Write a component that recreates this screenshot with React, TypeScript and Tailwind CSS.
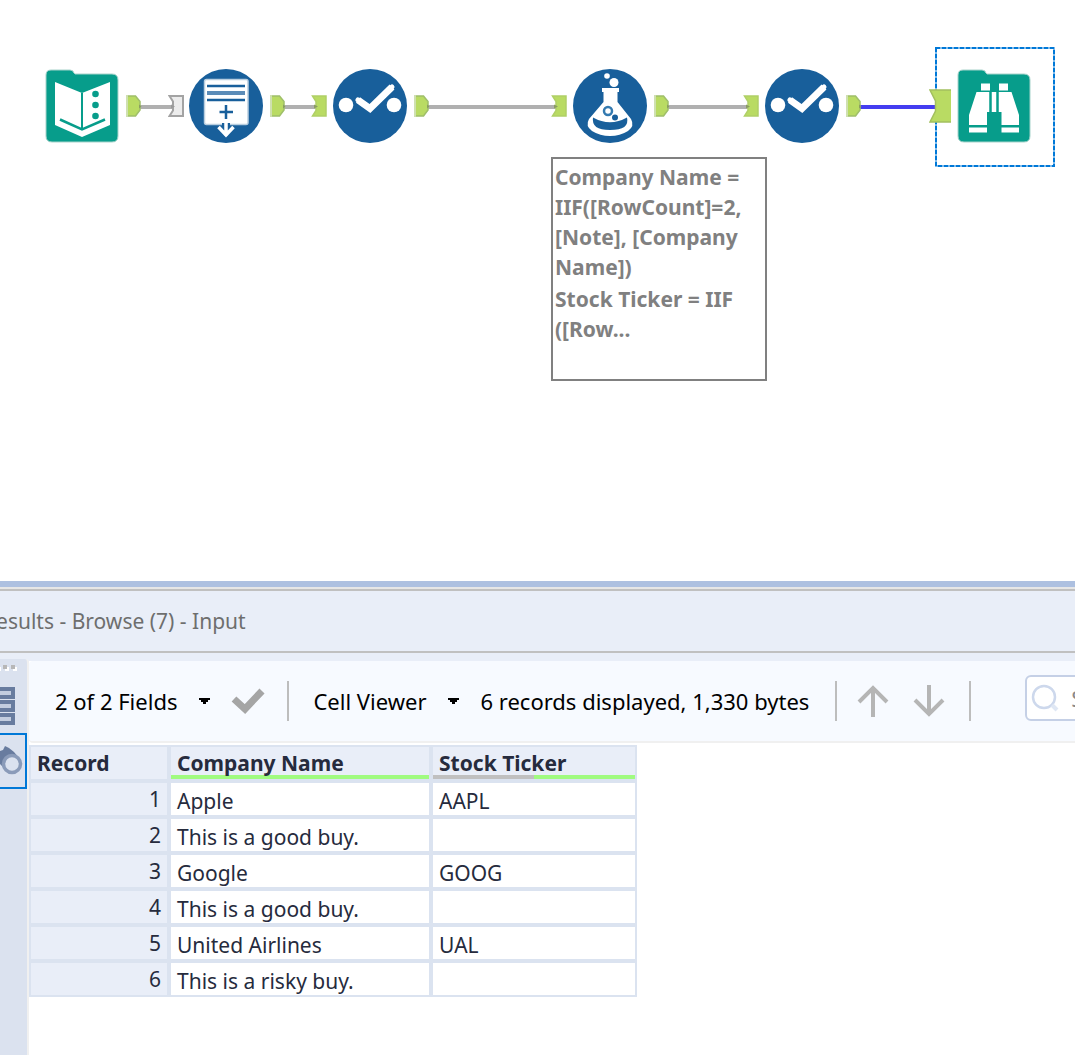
import type { ReactNode } from "react";

const GREEN = "#b9db63";
const GREEN_EDGE = "#9fbf6a";

function Place({ className, children }: { className: string; children: ReactNode }) {
  return <div className={"absolute " + className}>{children}</div>;
}

function OutAnchor({ className }: { className: string }) {
  return (
    <Place className={className}>
      <svg className="block" width="16" height="22" viewBox="0 0 16 22">
        <path d="M1 1H9.500L14 6.500V15L9.500 21H1Z" fill={GREEN} stroke={GREEN_EDGE} strokeWidth="1.500" />
        <path d="M1 0V22" stroke="#cfe0b0" strokeWidth="2" />
        <path d="M13 9.500L15.500 11.500L13 13.500" fill="#8a9d62" />
      </svg>
    </Place>
  );
}

function InAnchor({ className, optional = false }: { className: string; optional?: boolean }) {
  return (
    <Place className={className}>
      <svg className="block" width="16" height="22" viewBox="0 0 16 22">
        <path
          d="M1.500 1H15V21H1.500L5 15.500V6.500Z"
          fill={optional ? "#ececec" : GREEN}
          stroke={optional ? "#a3a3a3" : "#b0d067"}
          strokeWidth={optional ? 2 : 1.500}
        />
        <path d="M3 9.500L7 11.500L3 13.500Z" fill={optional ? "#9a9a9a" : "#8a9d62"} />
      </svg>
    </Place>
  );
}

function InputTool() {
  return (
    <svg className="block" width="74" height="74" viewBox="0 0 74 74" role="img" aria-label="Input Data">
      <path d="M6 1H25Q28 1 29 4L30 5H67Q73 5 73 11V67Q73 73 67 73H7Q1 73 1 67V6Q1 1 6 1Z" fill="#079d8b" stroke="#a8d3cb" strokeWidth="1" />
      <path d="M10 13L37 24L65 13V56L37 68L10 56Z" fill="#fff" />
      <path d="M37 24V60" stroke="#079d8b" strokeWidth="2" />
      <path d="M15 50.500L37 60.500L60 50.500" fill="none" stroke="#079d8b" strokeWidth="2.500" />
      <circle cx="50.500" cy="25" r="3.300" fill="#079d8b" />
      <circle cx="50.500" cy="36" r="3.300" fill="#079d8b" />
      <circle cx="50.500" cy="47" r="3.300" fill="#079d8b" />
    </svg>
  );
}

function RecordTool() {
  return (
    <svg className="block" width="74" height="74" viewBox="0 0 74 74" role="img" aria-label="Multi-Row Formula">
      <circle cx="37" cy="37" r="37" fill="#185f9b" />
      <rect x="15.500" y="10.500" width="43.500" height="45" rx="2" fill="#fff" stroke="#b9cee0" strokeWidth="1.500" />
      <path d="M18 17H56M18 31H56" stroke="#185f9b" strokeWidth="2.500" />
      <path d="M18 24H56" stroke="#5b8cb8" strokeWidth="4" />
      <path d="M37 36V50M30.500 43H44" stroke="#185f9b" strokeWidth="2.500" />
      <path d="M37 54V65" stroke="#185f9b" strokeWidth="8" />
      <path d="M37 54V67M29.500 58L37 66L44.500 58" fill="none" stroke="#fff" strokeWidth="3.500" />
    </svg>
  );
}

function SelectTool() {
  return (
    <svg className="block" width="74" height="74" viewBox="0 0 74 74" role="img" aria-label="Select">
      <circle cx="37" cy="37" r="37" fill="#185f9b" />
      <circle cx="13" cy="36" r="7.300" fill="#fff" />
      <circle cx="61" cy="36" r="7.300" fill="#fff" />
      <path d="M25 31L37 39.500L59 18" fill="none" stroke="#fff" strokeWidth="7" />
      <path d="M25 31L37 39.500L59 18" fill="none" stroke="#fff" strokeWidth="5" strokeLinecap="round" />
    </svg>
  );
}

function FormulaTool() {
  return (
    <svg className="block" width="74" height="74" viewBox="0 0 74 74" role="img" aria-label="Formula">
      <circle cx="37" cy="37" r="37" fill="#185f9b" />
      <circle cx="34" cy="7" r="2.800" fill="#fff" />
      <circle cx="41" cy="13.500" r="4.500" fill="#fff" />
      <path d="M29 19H46V23H44.500V33L58 50Q62 57 55 62Q47 67 37 67Q27 67 19 62Q12 57 16 50L30.500 33V23H29Z" fill="#fff" />
      <path d="M20 48.500Q37 58 54 48.500Q57 61 37 61Q18 61 20 48.500Z" fill="#185f9b" />
      <circle cx="35" cy="42" r="4" fill="#fff" stroke="#347ab0" strokeWidth="2.500" />
      <circle cx="42" cy="48.500" r="3" fill="#185f9b" />
    </svg>
  );
}

function BrowseTool() {
  return (
    <svg className="block" width="74" height="74" viewBox="0 0 74 74" role="img" aria-label="Browse">
      <path d="M6 1H25Q28 1 29 4L30 5H67Q73 5 73 11V67Q73 73 67 73H7Q1 73 1 67V6Q1 1 6 1Z" fill="#079d8b" stroke="#a8d3cb" strokeWidth="1" />
      <path d="M24 14.500H33V21.500H24ZM42 14.500H51V21.500H42Z" fill="#fff" />
      <path d="M19.500 23H54.500L62 46V56H44.500V43H30V56H12V46Z" fill="#fff" />
      <path d="M12 58.500H30V63.500H12ZM44.500 58.500H62V63.500H44.500Z" fill="#fff" />
      <path d="M33.500 23V43M40.500 23V43" stroke="#079d8b" strokeWidth="2.500" />
    </svg>
  );
}

function Wires() {
  return (
    <svg className="absolute left-0 top-0" width="1075" height="200" viewBox="0 0 1075 200" aria-hidden="true">
      <path d="M140 107H174M284 107H317M428 107H557M668 107H749" stroke="#b0b0b0" strokeWidth="4" />
      <path d="M860 107H936" stroke="#443df0" strokeWidth="4" />
    </svg>
  );
}

function WorkflowCanvas() {
  return (
    <section aria-label="Workflow" className="relative min-h-[581px] shrink-0 overflow-hidden bg-white">
      <Place className="left-[935px] top-[47px]">
        <svg className="block" width="120" height="120" viewBox="0 0 120 120" aria-hidden="true">
          <rect x="1" y="1" width="118" height="118" fill="none" stroke="#80bbeb" strokeWidth="2" />
          <rect x="1" y="1" width="118" height="118" fill="none" stroke="#0078d7" strokeWidth="2" strokeDasharray="4 2" />
        </svg>
      </Place>
      <Wires />
      <Place className="left-[45px] top-[69px]"><InputTool /></Place>
      <OutAnchor className="left-[126px] top-[95px]" />
      <InAnchor className="left-[168px] top-[95px]" optional />
      <Place className="left-[189px] top-[69px]"><RecordTool /></Place>
      <OutAnchor className="left-[270px] top-[95px]" />
      <InAnchor className="left-[311px] top-[95px]" />
      <Place className="left-[333px] top-[69px]"><SelectTool /></Place>
      <OutAnchor className="left-[414px] top-[95px]" />
      <InAnchor className="left-[551px] top-[95px]" />
      <Place className="left-[573px] top-[69px]"><FormulaTool /></Place>
      <OutAnchor className="left-[654px] top-[95px]" />
      <InAnchor className="left-[743px] top-[95px]" />
      <Place className="left-[765px] top-[69px]"><SelectTool /></Place>
      <OutAnchor className="left-[846px] top-[95px]" />
      <Place className="left-[929px] top-[89px]">
        <svg className="block" width="22" height="34" viewBox="0 0 22 34" aria-hidden="true">
          <path d="M1 1H22V33H1L6.500 22V12Z" fill={GREEN} />
          <path d="M22 1H1L6.500 12V22L1 33H22" fill="none" stroke="#a3c05f" strokeWidth="1.500" />
        </svg>
      </Place>
      <Place className="left-[957px] top-[69px]"><BrowseTool /></Place>
      <Place className="left-[551px] top-[157px] h-[224px] w-[216px] border-2 border-[#808080] bg-white px-0.5 py-[3px] text-[21px] font-bold leading-[30px] text-[#808080]">
        <p>Company Name = IIF([RowCount]=2, [Note], [Company Name])</p>
        <p className="mt-0.5">Stock Ticker = IIF ([Row...</p>
      </Place>
    </section>
  );
}

function Divider() {
  return <div className="h-10 w-0.5 shrink-0 bg-[#bdbdbd]" />;
}

function Caret() {
  return (
    <svg className="block" width="12" height="6" viewBox="0 0 12 6" aria-hidden="true">
      <path d="M0 0H11V2H9V4H7V6H4V4H2V2H0Z" fill="#000" />
    </svg>
  );
}

function SideBar() {
  return (
    <nav aria-label="Result views" className="-mt-0.5 flex w-[29px] shrink-0 flex-col items-start overflow-hidden rounded-tr border-r-2 border-[#f0f0f0] bg-[#dbe2ef]">
      <svg className="mt-1 block" width="27" height="8" viewBox="0 0 27 8" aria-hidden="true">
        <path d="M0 4H1V8H0ZM5 4H9V8H5ZM13 4H17V8H13Z" fill="#fff" />
        <path d="M3 2H7V6H3ZM11 2H15V6H11Z" fill="#b7b7b7" />
      </svg>
      <button type="button" aria-label="Messages" className="mt-4 block">
        <svg className="block" width="16" height="38" viewBox="0 0 16 38" aria-hidden="true">
          <path d="M-4 0H15V12H-4ZM-4 13H15V25H-4ZM-4 26H15V38H-4Z" fill="#687c9f" />
          <path d="M0 4H11V8H0ZM0 17H11V21H0ZM0 30H11V34H0Z" fill="#c3cddf" />
        </svg>
      </button>
      <button type="button" aria-label="Data" className="mt-2 block h-14 w-[27px] border-y-2 border-r-2 border-[#0078d7]">
        <svg className="block" width="25" height="52" viewBox="0 0 25 52" aria-hidden="true">
          <path d="M0 16L3 15L5 11L9 13L14 17L19 23L5 34L0 29Z" fill="#687c9f" />
          <circle cx="12" cy="29" r="8.500" fill="#dbe2ef" stroke="#8a9bb9" strokeWidth="3.500" />
        </svg>
      </button>
    </nav>
  );
}

function Toolbar() {
  return (
    <div className="flex h-[82px] shrink-0 items-center overflow-hidden rounded-l border-b-2 border-[#f0f0f0] bg-[#f7faff] text-[22px] text-black">
      <button type="button" className="ml-[26px] flex shrink-0 items-center gap-[22px] whitespace-nowrap">
        2 of 2 Fields
        <Caret />
      </button>
      <button type="button" aria-label="Apply" className="ml-5 shrink-0">
        <svg className="block" width="34" height="28" viewBox="0 0 34 28" aria-hidden="true">
          <path d="M3 12L14 22L31 4" fill="none" stroke="#a5a5a5" strokeWidth="7" />
        </svg>
      </button>
      <div className="ml-[22px]"><Divider /></div>
      <button type="button" className="ml-6 flex shrink-0 items-center gap-[22px] whitespace-nowrap">
        Cell Viewer
        <Caret />
      </button>
      <span className="ml-5 shrink-0 whitespace-nowrap">6 records displayed, 1,330 bytes</span>
      <div className="ml-[26px]"><Divider /></div>
      <button type="button" aria-label="Previous" className="ml-5 shrink-0">
        <svg className="block" width="32" height="32" viewBox="0 0 32 32" aria-hidden="true">
          <path d="M16 32V3M2 17L16 3L30 17" fill="none" stroke="#b5b5b5" strokeWidth="4" />
        </svg>
      </button>
      <button type="button" aria-label="Next" className="ml-6 shrink-0">
        <svg className="block" width="32" height="32" viewBox="0 0 32 32" aria-hidden="true">
          <path d="M16 0V29M2 15L16 29L30 15" fill="none" stroke="#b5b5b5" strokeWidth="4" />
        </svg>
      </button>
      <div className="ml-6"><Divider /></div>
      <label className="ml-[54px] mb-1.5 flex h-[46px] w-60 shrink-0 items-center rounded-md border-2 border-[#c5d0e6] bg-white pl-1">
        <svg className="block shrink-0" width="28" height="28" viewBox="0 0 28 28" aria-hidden="true">
          <circle cx="13" cy="13" r="11" fill="none" stroke="#cdd8ec" strokeWidth="2.500" />
          <path d="M21 21L26 26" stroke="#dfe7f4" strokeWidth="4" />
        </svg>
        <input type="text" aria-label="Search" placeholder="Search" className="ml-3 w-40 bg-transparent outline-none placeholder:text-[#8a8a8a]" />
      </label>
    </div>
  );
}

const rows: [string, string][] = [
  ["Apple", "AAPL"],
  ["This is a good buy.", ""],
  ["Google", "GOOG"],
  ["This is a good buy.", ""],
  ["United Airlines", "UAL"],
  ["This is a risky buy.", ""],
];

function ResultsTable() {
  return (
    <table className="mt-0.5 w-[608px] table-fixed border-separate border-spacing-0 text-left text-[21px] leading-7 text-[#262b3d]">
      <colgroup>
        <col className="w-[140px]" />
        <col className="w-[262px]" />
        <col className="w-[206px]" />
      </colgroup>
      <thead>
        <tr className="h-9">
          <th scope="col" className="border-2 border-[#dbe3f0] bg-[#e9eef8] p-0 align-top font-bold">
            <div className="h-8 px-1.5 leading-8">Record</div>
          </th>
          <th scope="col" className="border-2 border-[#dbe3f0] bg-[#e9eef8] p-0 align-top font-bold">
            <div className="h-7 px-1.5 leading-8">Company Name</div>
            <div className="h-1 bg-[#a0fb80]" />
          </th>
          <th scope="col" className="border-2 border-[#dbe3f0] bg-[#e9eef8] p-0 align-top font-bold">
            <div className="h-7 px-1.5 leading-8">Stock Ticker</div>
            <div className="flex h-1 bg-[#a0fb80]"><div className="w-1/2 bg-[#c0c0c0]" /></div>
          </th>
        </tr>
      </thead>
      <tbody>
        {rows.map(([company, ticker], i) => (
          <tr key={i} className="h-9">
            <td className="border-2 border-[#dbe3f0] bg-[#e9eef8] px-1.5 py-0.5 text-right">{i + 1}</td>
            <td className="border-2 border-[#dbe3f0] bg-white px-1.5 pb-0 pt-1">{company}</td>
            <td className="border-2 border-[#dbe3f0] bg-white px-1.5 pb-0 pt-1">{ticker}</td>
          </tr>
        ))}
      </tbody>
    </table>
  );
}

export default function App() {
  return (
    <main className="flex min-h-screen flex-col overflow-hidden bg-white font-['Noto_Sans',sans-serif]">
      <WorkflowCanvas />
      <div className="h-1.5 shrink-0 bg-[#adc0e0]" />
      <section aria-label="Results" className="flex flex-1 flex-col border-t-2 border-[#e6e6e6] bg-[#e9eef8]">
        <header className="flex h-16 shrink-0 items-center overflow-hidden border-y-2 border-[#c0c0c0] pt-0.5">
          <h2 className="-ml-[17px] whitespace-nowrap text-[21px] text-[#6e6e6e]">Results - Browse (7) - Input</h2>
        </header>
        <div className="flex flex-1 pt-2">
          <SideBar />
          <div className="flex min-w-0 flex-1 flex-col bg-white">
            <Toolbar />
            <ResultsTable />
          </div>
        </div>
      </section>
    </main>
  );
}
